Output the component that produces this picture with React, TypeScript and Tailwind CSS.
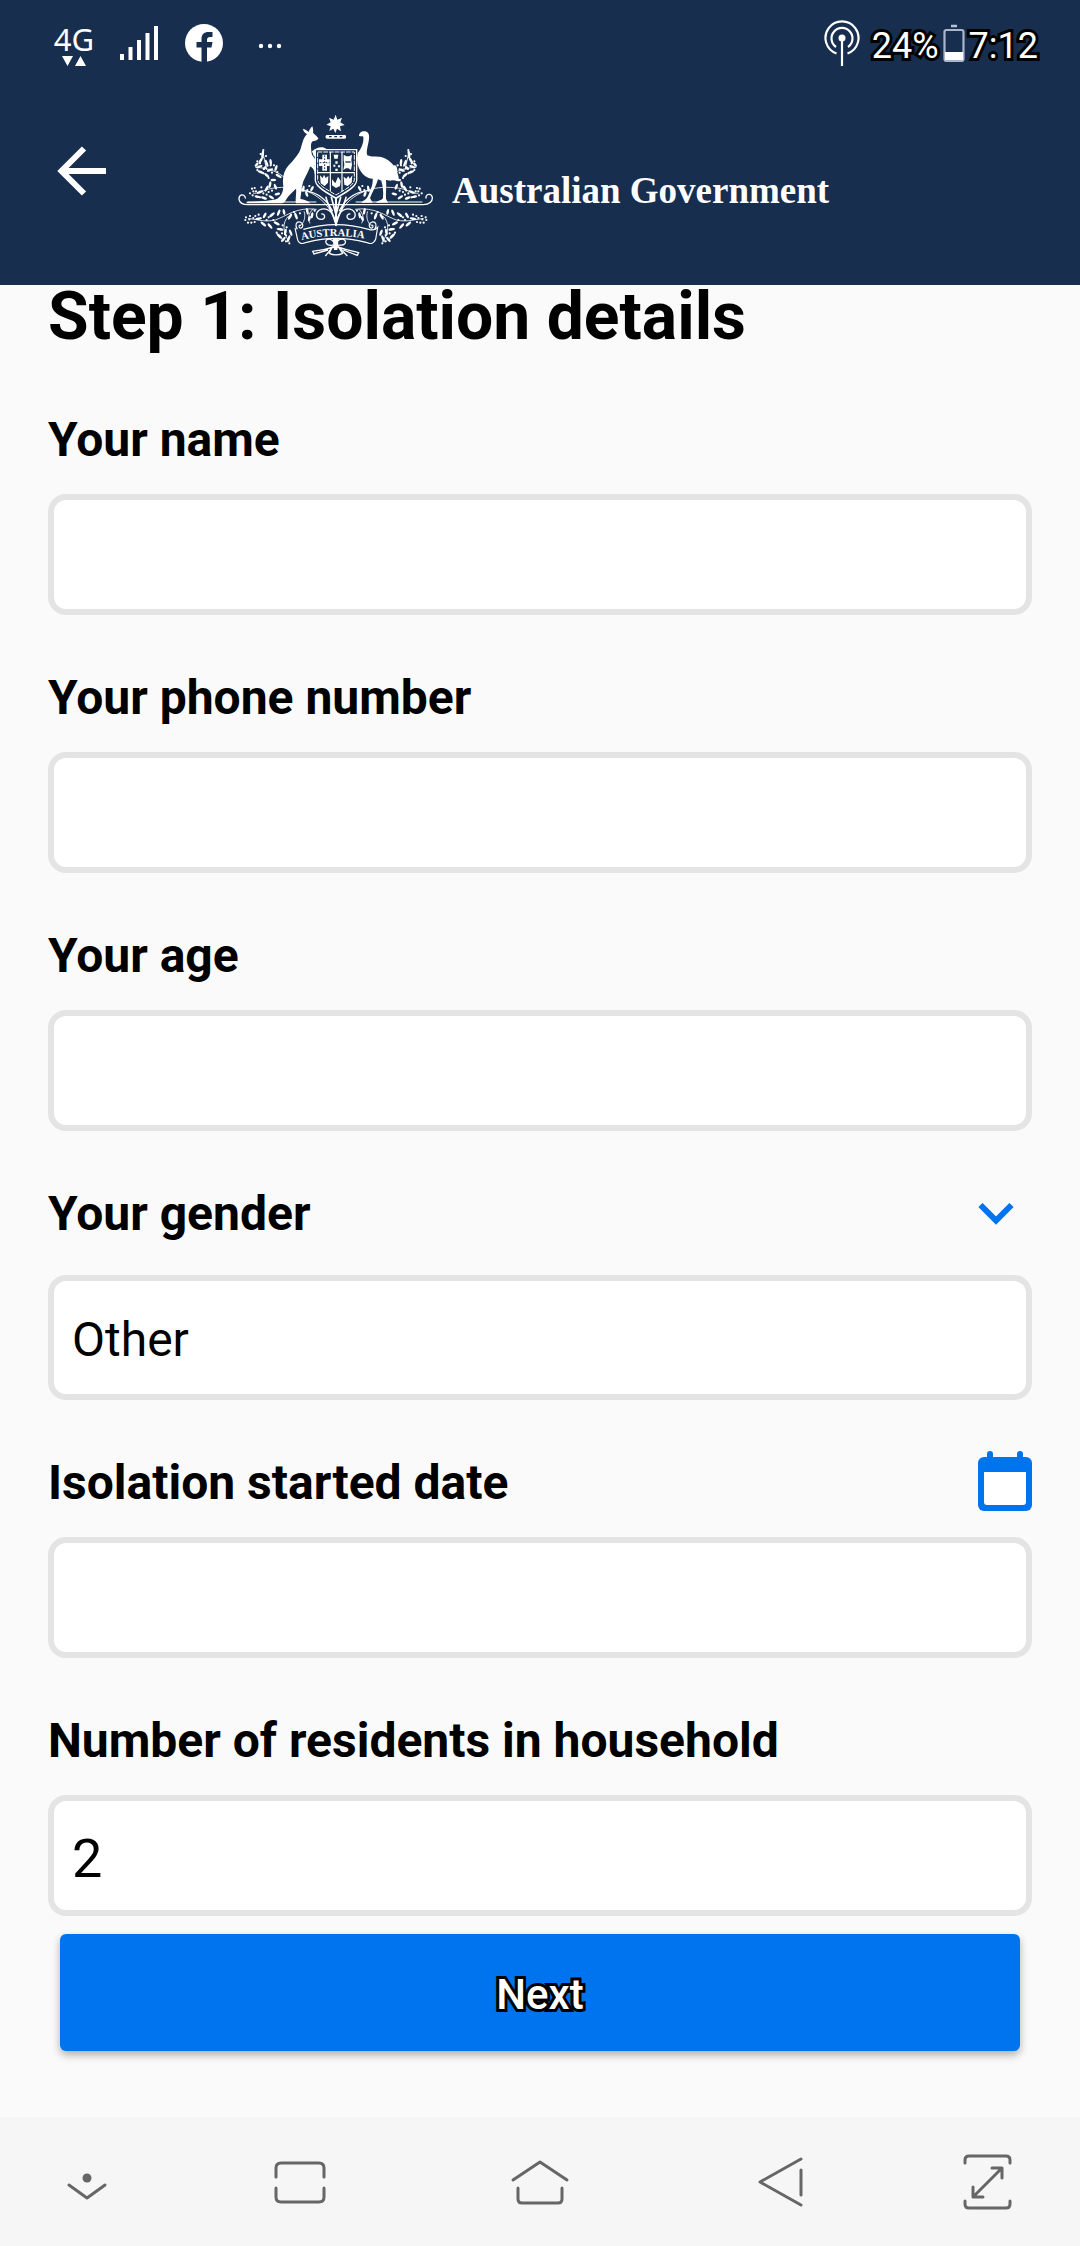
import { useState, type ReactNode } from "react";

type Leaf = [x: number, y: number, angle: number, size: number];

// One half of the wattle sprays, the other half is mirrored around the shield.
const LEAVES: Leaf[] = [
  [128, 158, 80, 13], [122, 178, 60, 12], [140, 186, 110, 13], [152, 182, 95, 11], [118, 196, 20, 12],
  [122, 212, -20, 12], [140, 222, -40, 11], [150, 206, 20, 12], [168, 200, 70, 11], [176, 224, -30, 12],
  [160, 236, 0, 10], [110, 190, 50, 9], [134, 200, 45, 9],
  [120, 272, 20, 12], [140, 262, 60, 12], [150, 250, 80, 12], [166, 256, 110, 11], [132, 290, -20, 11],
  [154, 288, -35, 11], [172, 278, 10, 10], [112, 286, -10, 10],
  [116, 352, 10, 12], [134, 342, 60, 11], [130, 368, -40, 12], [150, 374, -50, 12], [156, 340, 40, 12],
  [176, 334, 70, 12], [192, 332, 100, 11], [170, 366, -30, 12], [210, 346, 60, 12], [228, 344, 110, 13],
  [180, 384, -10, 12], [178, 404, -45, 13], [196, 392, 80, 12], [206, 412, 70, 13], [190, 414, 50, 11],
  [212, 394, 110, 12], [262, 330, 100, 12], [276, 342, 80, 11], [268, 352, 70, 10], [250, 262, 80, 11],
  [276, 262, 60, 10], [260, 278, 110, 10],
];

const BERRIES: [number, number][] = [
  [130, 146], [122, 158], [138, 164], [128, 168], [112, 180], [120, 186], [112, 206], [130, 216], [152, 192], [162, 192],
  [156, 214], [146, 230], [172, 212], [96, 262], [104, 260], [100, 270], [90, 276], [98, 282], [108, 270], [124, 258],
  [130, 276], [140, 280], [146, 272], [156, 268], [120, 288], [78, 348], [76, 356], [90, 344], [88, 354], [84, 364],
  [94, 364], [100, 350], [106, 344], [104, 362], [116, 340], [140, 356], [160, 356], [146, 348], [170, 394], [188, 372],
  [200, 378], [186, 396], [198, 402], [208, 426], [198, 420], [222, 332], [240, 336], [284, 328], [262, 266], [268, 254],
];

function Spray() {
  return (
    <g>
      <g fill="none" stroke="#fff" strokeWidth="2.500">
        <path d="M342 350C318 290 262 258 196 258S130 276 100 276" />
        <path d="M338 330C316 286 280 268 240 268" strokeWidth="3.500" />
        <path d="M196 230C172 212 150 200 106 198M140 206L128 150" />
        <path d="M290 324C230 316 200 344 166 356C130 364 106 352 84 352" />
        <path d="M206 344C186 362 188 394 208 422M252 330C258 346 252 366 240 374" />
        <path d="M280 322C262 340 264 352 270 366" />
        <path d="M345 362C340 330 320 316 298 326C284 336 288 354 304 354C318 352 316 336 304 338" strokeWidth="4" />
      </g>
      {LEAVES.map(([x, y, angle, size]) => (
        <ellipse key={`${x}-${y}`} cx={x} cy={y} rx={size * 0.85} ry="3.800" transform={`rotate(${-angle} ${x} ${y})`} />
      ))}
      {BERRIES.map(([x, y]) => (
        <circle key={`${x}-${y}`} cx={x} cy={y} r="3.300" />
      ))}
    </g>
  );
}

function CoatOfArms() {
  return (
    <svg viewBox="54 38 588 432" className="h-36 w-[196px] shrink-0" fill="#fff" role="img" aria-label="Coat of arms">
      <path d="M347 40L352 55L366 49L361 63L374 71L360 75L363 90L351 82L346 95L340 82L328 89L332 75L319 70L332 63L327 49L341 55Z" />
      <rect x="317" y="101" width="61" height="11" rx="4" />
      <path d="M327 106h8M343 106h8M359 106h8" stroke="#172e4f" strokeWidth="4" />

      <Spray />
      <g transform="translate(695 0) scale(-1 1)">
        <Spray />
      </g>

      {/* ground scroll */}
      <g fill="none" stroke="#fff" strokeLinecap="round">
        <path d="M76 290C74 276 56 278 57 294C59 306 70 310 84 310H610C628 310 638 300 637 288C634 274 616 278 618 290" strokeWidth="4" />
        <path d="M84 302H288M408 302H606" strokeWidth="3" />
        <path d="M318 288C326 320 340 336 348 370C356 336 370 320 378 288M334 288L348 340L362 288" strokeWidth="5" />
        <path d="M348 284V372" strokeWidth="6" />
      </g>

      {/* kangaroo */}
      <path d="M249 82C254 83 262 88 266 92C268 86 273 78 277 75C280 82 280 90 279 94C284 100 292 105 295 111C294 117 284 119 276 121C271 128 273 146 276 160C283 170 290 178 286 190C282 196 276 190 272 190C268 206 258 222 250 240C244 258 244 276 241 292C252 296 266 297 270 306H228C225 296 230 276 228 262C218 272 206 282 200 292C196 300 192 306 184 306H80V301C118 300 152 299 172 292C184 284 190 270 190 254C186 228 192 208 206 192C222 174 236 160 242 142C248 124 250 108 261 99C254 94 249 88 249 82Z" />
      <path d="M276 150C288 140 306 132 320 144L318 150C304 146 292 154 282 166Z" />
      <path d="M272 182C284 188 292 204 290 222L284 218C284 206 278 198 268 194Z" />

      {/* emu */}
      <path d="M417 104C417 94 426 88 436 90C448 92 449 106 446 120C443 136 438 152 442 162C454 168 470 164 486 168C512 176 534 200 537 236C530 240 520 234 512 238L498 236C500 256 497 276 498 292L504 304H468C474 296 486 298 489 290C491 270 488 252 484 238L474 234C468 256 456 274 450 290L458 304H424C428 298 438 296 442 288C450 270 460 250 458 232C444 232 432 224 424 212C412 196 408 174 414 154C424 140 432 124 430 106C426 104 422 106 417 104Z" />

      {/* shield */}
      <path d="M284 143H412V238C408 262 374 276 348 294C322 276 288 262 284 238Z" fill="#fff" />
      <path d="M288 147H408V238C404 258 374 270 348 288C322 270 292 258 288 238Z" fill="#172e4f" />
      <path d="M293 152H403V236C400 254 372 266 348 281C324 266 296 254 293 236Z" fill="none" stroke="#fff" strokeWidth="3" strokeDasharray="14 3" />
      <path d="M293 214H403M331 152V270M366 152V270" stroke="#fff" strokeWidth="3.500" />
      <path d="M307 160h14v14h8v20h-8v14h-14v-14h-10v-20h10z" />
      <path d="M314 162V208M299 184H328" stroke="#172e4f" strokeWidth="3" strokeDasharray="5 4" />
      <path d="M341 160h14l-2 12h-10zM346 180h7v7h-7zM354 192h6v6h-6zM340 190h6v6h-6zM346 202h7v7h-7z" />
      <path d="M371 160l8 5h8l9-5-2 16 2 14-3 16-8-5h-7l-8 5 3-16-2-14z" />
      <path d="M376 182H392" stroke="#172e4f" strokeWidth="4" />
      <path d="M300 222l8 8 4-10 5 10 8-6-1 20-10 10-12-8zM336 234l10 12 8-20 8 12-2 16-12 6-12-8zM371 226l8 6 6-8 4 8 8-10-2 22-12 10-10-4z" />

      {/* motto ribbon */}
      <path d="M240 378C310 394 386 394 458 378L473 386L467 420C458 428 448 426 440 422C380 402 316 402 258 422C248 428 238 426 232 418L224 386Z" fill="#172e4f" />
      <g fill="none" stroke="#fff" strokeWidth="3.500">
        <path d="M232 384C224 372 228 360 240 362C252 366 250 382 240 380C234 376 238 370 242 372" />
        <path d="M464 384C472 372 468 360 456 362C444 366 446 382 456 380C462 376 458 370 454 372" />
        <path d="M250 384C312 366 384 366 446 384C458 388 466 386 473 378L467 414C460 430 448 428 438 423C380 408 316 408 260 423C248 428 236 430 232 412L225 380" />
      </g>
      <path id="motto" d="M245 416Q347 392 454 416" fill="none" />
      <text className="font-['Liberation_Serif'] font-bold" fontSize="32">
        <textPath href="#motto">AUSTRALIA</textPath>
      </text>
      <g fill="none" stroke="#fff" strokeWidth="4">
        <path d="M346 430C334 406 314 412 318 424C322 434 338 432 346 430C356 406 380 412 376 424C372 434 356 432 346 430" />
        <path d="M342 432L316 464M352 432L382 464M340 436C322 446 300 446 278 450L282 458L324 446M354 436C372 446 392 446 416 454L412 462L370 446" />
        <path d="M328 456C338 462 358 462 368 456L356 438H336Z" />
      </g>
      <path d="M338 412h18l-4 34h-10z" />
    </svg>
  );
}

function StatusBar() {
  return (
    <div className="flex h-[86px] items-start justify-between pr-[42px] pl-[52px] text-white">
      <div className="flex items-start pt-6">
        <div className="flex w-11 flex-col items-center gap-[2px]">
          <span className="font-['Noto_Sans'] text-[31px] leading-[30px]">4G</span>
          <svg viewBox="0 0 24 10" className="h-[10px] w-6" fill="currentColor">
            <path d="M0 0h11L5.500 10zM13 10h11L18.500 0z" />
          </svg>
        </div>
        <svg viewBox="0 0 40 36" className="ml-6 h-9 w-10" fill="currentColor">
          <path d="M0 30h4v6H0zM8.500 23h4v13h-4zM17 16h4v20h-4zM25.500 9h4v27h-4zM34 2h4v34h-4z" />
        </svg>
        <svg viewBox="0 0 38 38" className="ml-[25px] h-[38px] w-[38px]" fill="currentColor">
          <circle cx="19" cy="19" r="19" />
          <path d="M16.500 38V23.500H11.500V18H16.500V15C16.500 10.500 19 8 23.500 8H27.500V13H25C23 13 22 14 22 16V18H27.500L26.500 23.500H22V38Z" fill="#172e4f" />
        </svg>
        <svg viewBox="0 0 24 6" className="mt-[19px] ml-[35px] h-[6px] w-6" fill="currentColor">
          <circle cx="3" cy="3" r="2.200" />
          <circle cx="12" cy="3" r="2.200" />
          <circle cx="21" cy="3" r="2.200" />
        </svg>
      </div>
      <div className="flex items-start pt-5 text-[36px] leading-[52px] [-webkit-text-stroke:6px_black] [paint-order:stroke_fill]">
        <svg viewBox="0 0 36 48" className="mr-3 h-12 w-9" fill="none" stroke="currentColor" strokeWidth="2.200">
          <path d="M12.500 33.500A16.500 16.500 0 1 1 23.500 33.500" />
          <path d="M12 27A10.500 10.500 0 1 1 24 27" />
          <circle cx="18" cy="18" r="3.500" fill="currentColor" stroke="none" />
          <path d="M18 18V46" />
        </svg>
        <span>24%</span>
        <svg viewBox="0 0 22 40" className="mx-1 mt-1 h-10 w-[22px]">
          <path d="M8 2h6" stroke="#b9c2d0" strokeWidth="2.500" />
          <rect x="1.500" y="6" width="19" height="31" rx="2" fill="none" stroke="#aab6cb" strokeWidth="2.200" />
          <rect x="2" y="28" width="18" height="8" fill="#fff" />
        </svg>
        <span>7:12</span>
      </div>
    </div>
  );
}

function Field({
  id,
  label,
  icon,
  value = "",
}: {
  id: string;
  label: string;
  icon?: ReactNode;
  value?: string;
}) {
  return (
    <div className="flex flex-col gap-[26px]">
      <div className="flex h-14 items-end justify-between">
        <label htmlFor={id} className="text-[48px] leading-[56px] font-bold">
          {label}
        </label>
        {icon}
      </div>
      <input
        id={id}
        type="text"
        defaultValue={value}
        className="h-[121px] w-full rounded-[18px] border-[6px] border-[#e4e4e4] bg-white px-[18px] pt-[6px] text-[54px] outline-none"
      />
    </div>
  );
}

function NavButton({ label, side, children }: { label: string; side?: boolean; children: ReactNode }) {
  return (
    <button aria-label={label} className={side ? "flex w-[180px] justify-center" : "flex flex-1 justify-center"}>
      <svg
        viewBox="0 0 64 64"
        className="h-16 w-16"
        fill="none"
        stroke="#666"
        strokeWidth="3"
        strokeLinecap="round"
        strokeLinejoin="round"
      >
        {children}
      </svg>
    </button>
  );
}

export default function App() {
  const [gender, setGender] = useState("Other");

  return (
    <div className="flex min-h-screen flex-col bg-[#fafafa] font-[Roboto,sans-serif] text-black">
      <header className="bg-[#172e4f]">
        <StatusBar />
        <div className="flex h-[199px] items-center pl-14">
          <button aria-label="Back" className="pb-[30px]">
            <svg viewBox="0 0 52 52" className="h-[52px] w-[52px]" fill="none" stroke="#fff" strokeWidth="6">
              <path d="M28 3.500L5.500 26L28 48.500M6 26H50" />
            </svg>
          </button>
          <div className="ml-[130px] flex items-center gap-[18px]">
            <CoatOfArms />
            <span className="pt-[10px] font-['Liberation_Serif'] text-[37px] leading-[44px] font-bold text-white">
              Australian Government
            </span>
          </div>
        </div>
      </header>

      <main className="flex flex-1 flex-col px-12 pb-[66px]">
        <h1 className="mb-[63px] text-[66px] leading-[64px] font-bold">Step 1: Isolation details</h1>
        <form className="flex flex-col gap-[55px]" onSubmit={(e) => e.preventDefault()}>
          <Field id="name" label="Your name" />
          <Field id="phone" label="Your phone number" />
          <Field id="age" label="Your age" />

          <div className="flex flex-col gap-[33px]">
            <div className="flex h-14 items-center justify-between">
              <label htmlFor="gender" className="text-[48px] leading-[56px] font-bold">
                Your gender
              </label>
              <svg viewBox="0 0 36 24" className="mr-[18px] h-6 w-9" fill="none" stroke="#0073ef" strokeWidth="6">
                <path d="M2.500 3L18 18.500L33.500 3" />
              </svg>
            </div>
            <select
              id="gender"
              value={gender}
              onChange={(e) => setGender(e.target.value)}
              className="h-[125px] w-full appearance-none rounded-[18px] border-[6px] border-[#e4e4e4] bg-white px-[18px] pt-1 text-[48px] outline-none"
            >
              <option>Female</option>
              <option>Male</option>
              <option>Other</option>
            </select>
          </div>

          <Field
            id="started"
            label="Isolation started date"
            icon={
              <button type="button" aria-label="Pick a date">
                <svg viewBox="0 0 54 60" className="block h-[60px] w-[54px]" fill="#0073ef">
                  <rect y="6" width="54" height="54" rx="6" />
                  <rect x="9" width="6" height="12" rx="3" />
                  <rect x="39" width="6" height="12" rx="3" />
                  <path d="M6 21h42v30a3 3 0 0 1-3 3H9a3 3 0 0 1-3-3z" fill="#fff" />
                </svg>
              </button>
            }
          />

          <div className="flex flex-col gap-[18px]">
            <Field id="residents" label="Number of residents in household" value="2" />
            <button
              type="submit"
              className="mx-3 h-[117px] rounded-md bg-[#0073ef] pt-1 text-[42px] font-medium text-white shadow-[0_4px_8px_rgba(0,0,0,0.3)] [-webkit-text-stroke:6px_black] [paint-order:stroke_fill]"
            >
              Next
            </button>
          </div>
        </form>
      </main>

      <nav className="flex h-[129px] items-center bg-[#f6f6f6]">
        <NavButton label="Hide navigation bar" side>
          <path d="M11 35L29 48L47 35" />
          <circle cx="29" cy="28" r="4.500" fill="#666" stroke="none" />
        </NavButton>
        <NavButton label="Recent apps">
          <path d="M8 27V18Q8 13 13 13H51Q56 13 56 18V27M8 38V47Q8 52 13 52H51Q56 52 56 47V38" />
        </NavButton>
        <NavButton label="Home">
          <path d="M5 30L32 12L59 30M10 38V49Q10 53 14 53H50Q54 53 54 49V38" />
        </NavButton>
        <NavButton label="Back">
          <path d="M53 9L12 32L53 55M53 20V45" />
        </NavButton>
        <NavButton label="Full screen" side>
          <path d="M7 13V10Q7 6 11 6H48Q52 6 52 10V13M7 51V54Q7 58 11 58H48Q52 58 52 54V51" />
          <path d="M15 47L44 18M34 18H44V28M15 37V47H25" />
        </NavButton>
      </nav>
    </div>
  );
}
